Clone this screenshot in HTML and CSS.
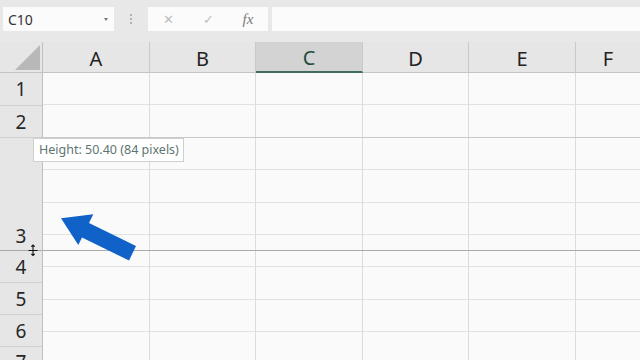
FILE: index.html
```html
<!DOCTYPE html>
<html lang="en">
<head>
    <meta charset="UTF-8">
    <meta name="viewport" content="width=device-width, initial-scale=1.0">
    <title>Row height</title>
    <link rel="stylesheet" href="styles.css">
</head>
<body>

    <div class="topbar">
        <div class="namebox">
            <span>C10</span>
            <span class="caret"></span>
        </div>
        <div class="grip">
            <span></span><span></span><span></span>
        </div>
        <div class="fxbox">
            <span class="fxbtn cancel">&#x2715;</span>
            <span class="fxbtn enter">&#x2713;</span>
            <span class="fxbtn fx">fx</span>
        </div>
        <div class="formula"></div>
    </div>

    <div class="sheet">
        <div class="rowheads">
            <div class="corner"><span class="tri"></span></div>
            <div class="rh first">1</div>
            <div class="rh">2</div>
            <div class="rh tall">3</div>
            <div class="rh">4</div>
            <div class="rh">5</div>
            <div class="rh">6</div>
            <div class="rh last">7</div>
        </div>

        <div class="col w107"><div class="ch">A</div><div class="body"></div></div>
        <div class="col w106"><div class="ch">B</div><div class="body"></div></div>
        <div class="col w107 selected"><div class="ch">C</div><div class="body"></div></div>
        <div class="col w106"><div class="ch">D</div><div class="body"></div></div>
        <div class="col w107"><div class="ch">E</div><div class="body"></div></div>
        <div class="col grow"><div class="ch">F</div><div class="body"></div></div>

        <!-- drag outline while resizing row 3 -->
        <div class="dragline top"></div>
        <div class="dragline bottom"></div>

        <div class="tooltip">Height: 50.40 (84 pixels)</div>

        <svg class="cursor" width="12" height="14" viewBox="0 0 12 14">
            <path d="M1.5 7.5h9M6 2v10.5M4.3 3.7l1.7-1.7 1.7 1.7M4.3 10.8l1.7 1.7 1.7-1.7" fill="none" stroke="#111" stroke-width="1.1"/>
        </svg>

        <svg class="pointer" width="90" height="60" viewBox="0 0 90 60">
            <polygon points="6,10.3 38.3,6.3 34,15.1 81,38.1 74,52.5 27,29.5 23.3,37" fill="#1062c8"/>
        </svg>
    </div>

</body>
</html>
```

FILE: styles.css
```css
* {
    margin: 0;
    padding: 0;
    box-sizing: border-box;
}
body {
    width: 640px;
    height: 360px;
    overflow: hidden;
    background: #fafafa;
    font-family: "Noto Sans", "Open Sans", sans-serif;
    color: #262626;
}

/* formula bar */
.topbar {
    height: 42px;
    background: #e8e8e8;
    display: flex;
    align-items: flex-start;
    padding: 7px 0 0 3px;
}
.namebox {
    width: 111px;
    height: 24px;
    background: #fbfbfb;
    display: flex;
    align-items: center;
    justify-content: space-between;
    padding: 0 5px 0 5px;
    font-size: 14px;
    color: #333;
}
.caret {
    width: 0;
    height: 0;
    border-left: 2.5px solid transparent;
    border-right: 2.5px solid transparent;
    border-top: 3px solid #777;
    margin-right: 1px;
}
.grip {
    width: 34px;
    height: 24px;
    display: flex;
    flex-direction: column;
    align-items: center;
    justify-content: center;
    gap: 2px;
}
.grip span {
    width: 2px;
    height: 2px;
    background: #b3b3b3;
}
.fxbox {
    width: 120px;
    height: 24px;
    background: #fbfbfb;
    display: flex;
    align-items: center;
    margin-right: 4px;
}
.fxbtn {
    width: 40px;
    text-align: center;
    color: #bdbdbd;
    font-size: 13px;
}
.fx {
    font-family: "Liberation Serif", serif;
    font-style: italic;
    font-size: 15px;
    color: #7a7a7a;
}
.formula {
    flex: 1;
    height: 24px;
    background: #fbfbfb;
}

/* grid */
.sheet {
    position: relative;
    display: flex;
    height: 318px;
}
.rowheads {
    width: 43px;
    background: #e6e6e6;
    border-right: 1px solid #bfbfbf;
    display: flex;
    flex-direction: column;
    overflow: hidden;
}
.corner {
    flex-shrink: 0;
    height: 31px;
    border-bottom: 1px solid #c4c4c4;
    position: relative;
}
.tri {
    position: absolute;
    right: 2px;
    bottom: 2px;
    width: 0;
    height: 0;
    border-left: 25px solid transparent;
    border-bottom: 25px solid #b8b8b8;
}
.rh {
    flex-shrink: 0;
    height: 32px;
    border-bottom: 1px solid #d0d0d0;
    display: flex;
    align-items: center;
    justify-content: center;
    font-size: 19px;
    color: #262626;
}
.rh.first {
    height: 33px;
}
.rh.tall {
    height: 113px;
    align-items: flex-end;
    padding-bottom: 1px;
    border-bottom-color: #a9a9a9;
}
.rh.last {
    height: 32px;
    align-items: flex-start;
    padding-top: 2px;
    border-bottom: none;
}

.col {
    display: flex;
    flex-direction: column;
    border-right: 1px solid #dcdcdc;
}
.w107 { width: 107px; }
.w106 { width: 106px; }
.grow { flex: 1; border-right: none; }

.ch {
    flex-shrink: 0;
    height: 31px;
    background: #e6e6e6;
    border-bottom: 1px solid #c4c4c4;
    display: flex;
    align-items: center;
    justify-content: center;
    padding-top: 2px;
    font-size: 20px;
    color: #222;
    margin-right: -1px;
    border-right: 1px solid #c9c9c9;
}
.grow .ch {
    margin-right: 0;
    border-right: none;
}
.selected .ch {
    background: #d3d3d3;
    color: #1e4d3e;
    border-bottom: 2px solid #3e6d5a;
}
.body {
    flex: 1;
    background: repeating-linear-gradient(to bottom, transparent 0 31.4px, #e1e1e1 31.4px 32.4px);
}

.dragline {
    position: absolute;
    left: 43px;
    right: 0;
    height: 1px;
}
.dragline.top {
    top: 95px;
    background: #c9c9c9;
}
.dragline.bottom {
    top: 208px;
    background: #a9a9a9;
}

.tooltip {
    position: absolute;
    left: 33px;
    top: 96px;
    background: #fff;
    border: 1px solid #cfcfcf;
    padding: 2px 4px 3px 5px;
    font-size: 12.5px;
    color: #5d7472;
    white-space: nowrap;
}
.cursor {
    position: absolute;
    left: 27px;
    top: 201px;
}
.pointer {
    position: absolute;
    left: 55px;
    top: 166px;
}
```
